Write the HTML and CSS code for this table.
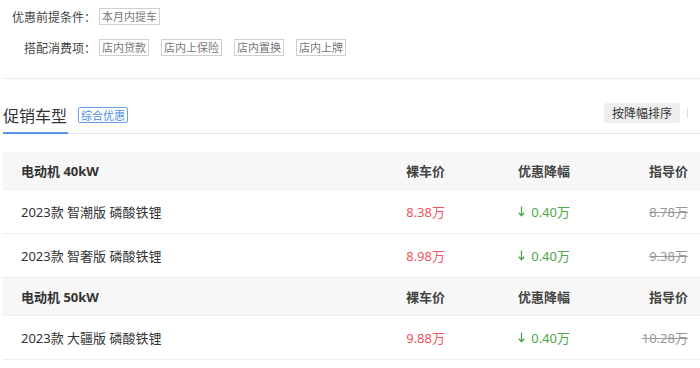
FILE: index.html
```html
<!DOCTYPE html>
<html lang="zh-CN">
<head>
<meta charset="utf-8">
<title>促销车型</title>
<link rel="stylesheet" href="styles.css">
</head>
<body>
<div class="page">
  <div class="filters">
    <div class="filter-row">
      <span class="filter-label">优惠前提条件：</span>
      <span class="tag">本月内提车</span>
    </div>
    <div class="filter-row">
      <span class="filter-label">搭配消费项：</span>
      <span class="tag">店内贷款</span>
      <span class="tag">店内上保险</span>
      <span class="tag">店内置换</span>
      <span class="tag">店内上牌</span>
    </div>
  </div>

  <div class="title-bar">
    <div class="tab">
      <span class="tab-title">促销车型</span>
      <span class="badge">综合优惠</span>
    </div>
    <div class="tools">
      <span class="sort-btn">按降幅排序</span>
      <span class="divider"></span>
    </div>
  </div>

  <div class="table">
    <div class="row group">
      <span class="c-name">电动机 40kW</span>
      <span class="c-price">裸车价</span>
      <span class="c-down">优惠降幅</span>
      <span class="c-guide">指导价</span>
    </div>
    <div class="row item">
      <span class="c-name">2023款 智潮版 磷酸铁锂</span>
      <span class="c-price red">8.38万</span>
      <span class="c-down green"><svg class="arrow" width="7" height="11" viewBox="0 0 7 11"><path d="M3.5 0.5V9.5M0.8 6.8L3.5 9.8L6.2 6.8" fill="none" stroke="#4ea64a" stroke-width="1.3"/></svg>0.40万</span>
      <span class="c-guide old">8.78万</span>
    </div>
    <div class="row item">
      <span class="c-name">2023款 智奢版 磷酸铁锂</span>
      <span class="c-price red">8.98万</span>
      <span class="c-down green"><svg class="arrow" width="7" height="11" viewBox="0 0 7 11"><path d="M3.5 0.5V9.5M0.8 6.8L3.5 9.8L6.2 6.8" fill="none" stroke="#4ea64a" stroke-width="1.3"/></svg>0.40万</span>
      <span class="c-guide old">9.38万</span>
    </div>
    <div class="row group">
      <span class="c-name">电动机 50kW</span>
      <span class="c-price">裸车价</span>
      <span class="c-down">优惠降幅</span>
      <span class="c-guide">指导价</span>
    </div>
    <div class="row item">
      <span class="c-name">2023款 大疆版 磷酸铁锂</span>
      <span class="c-price red">9.88万</span>
      <span class="c-down green"><svg class="arrow" width="7" height="11" viewBox="0 0 7 11"><path d="M3.5 0.5V9.5M0.8 6.8L3.5 9.8L6.2 6.8" fill="none" stroke="#4ea64a" stroke-width="1.3"/></svg>0.40万</span>
      <span class="c-guide old">10.28万</span>
    </div>
  </div>
</div>
</body>
</html>
```

FILE: styles.css
```css
* { box-sizing: border-box; }

html, body {
  margin: 0;
  padding: 0;
  background: #fff;
}

body {
  width: 700px;
  height: 368px;
  overflow: hidden;
  font-family: "Noto Sans", "Noto Sans CJK SC", sans-serif;
  color: #333;
}

.page {
  margin-left: 3px;
  width: 697px;
}

.filters {
  padding-top: 1px;
  padding-bottom: 15px;
  border-bottom: 1px solid #ececec;
}

.filter-row {
  display: flex;
  align-items: center;
  height: 31px;
}

.filter-label {
  width: 93px;
  text-align: right;
  font-size: 12px;
  line-height: 16px;
  color: #444;
  font-family: "Noto Sans CJK SC", sans-serif;
}

.tag {
  margin-left: 3px;
  margin-right: 9px;
  padding: 0 2px;
  border: 1px solid #cfcfcf;
  font-size: 11px;
  line-height: 15px;
  color: #777;
  font-family: "Noto Sans CJK SC", sans-serif;
}

.title-bar {
  display: flex;
  justify-content: space-between;
  align-items: flex-end;
  margin-top: 24px;
  border-bottom: 1px solid #e6e6e6;
}

.tab {
  display: flex;
  align-items: center;
  gap: 11px;
  padding-bottom: 8px;
  margin-bottom: -1px;
  position: relative;
}

.tab::after {
  content: "";
  position: absolute;
  left: 0;
  bottom: 0;
  width: 65px;
  height: 2px;
  background: #5a95e4;
}

.tab-title {
  font-size: 16px;
  line-height: 22px;
  color: #333;
  font-family: "Noto Sans CJK SC", sans-serif;
}

.badge {
  padding: 0 2px;
  border: 1px solid #6aa0e6;
  border-radius: 2px;
  font-size: 11px;
  line-height: 14px;
  color: #4a8ce0;
  font-family: "Noto Sans CJK SC", sans-serif;
}

.tools {
  display: flex;
  align-items: center;
  gap: 7px;
  margin-right: 12px;
  padding-bottom: 10px;
}

.sort-btn {
  padding: 0 8px;
  height: 20px;
  line-height: 20px;
  background: #eeeeee;
  border-radius: 3px;
  font-size: 12px;
  color: #333;
  font-family: "Noto Sans CJK SC", sans-serif;
}

.divider {
  width: 1px;
  height: 10px;
  background: #dddddd;
}

.table {
  margin-top: 18px;
}

.row {
  display: grid;
  grid-template-columns: 1fr 110px 125px 118px;
  align-items: center;
  padding: 0 12px 0 18px;
  font-size: 13px;
  border-bottom: 1px solid #efefef;
}

.row > span:not(.c-name) {
  text-align: right;
}

.group {
  height: 38px;
  background: #f7f7f7;
  font-weight: bold;
  color: #444;
}

.group .c-name {
  color: #333;
}

.item {
  height: 44px;
  color: #333;
}

.red { color: #ef5560; }

.green {
  color: #4ea64a;
  display: flex;
  align-items: center;
  justify-content: flex-end;
}

.arrow {
  margin-right: 6px;
}

.old {
  color: #999;
  text-decoration: line-through;
}
```
